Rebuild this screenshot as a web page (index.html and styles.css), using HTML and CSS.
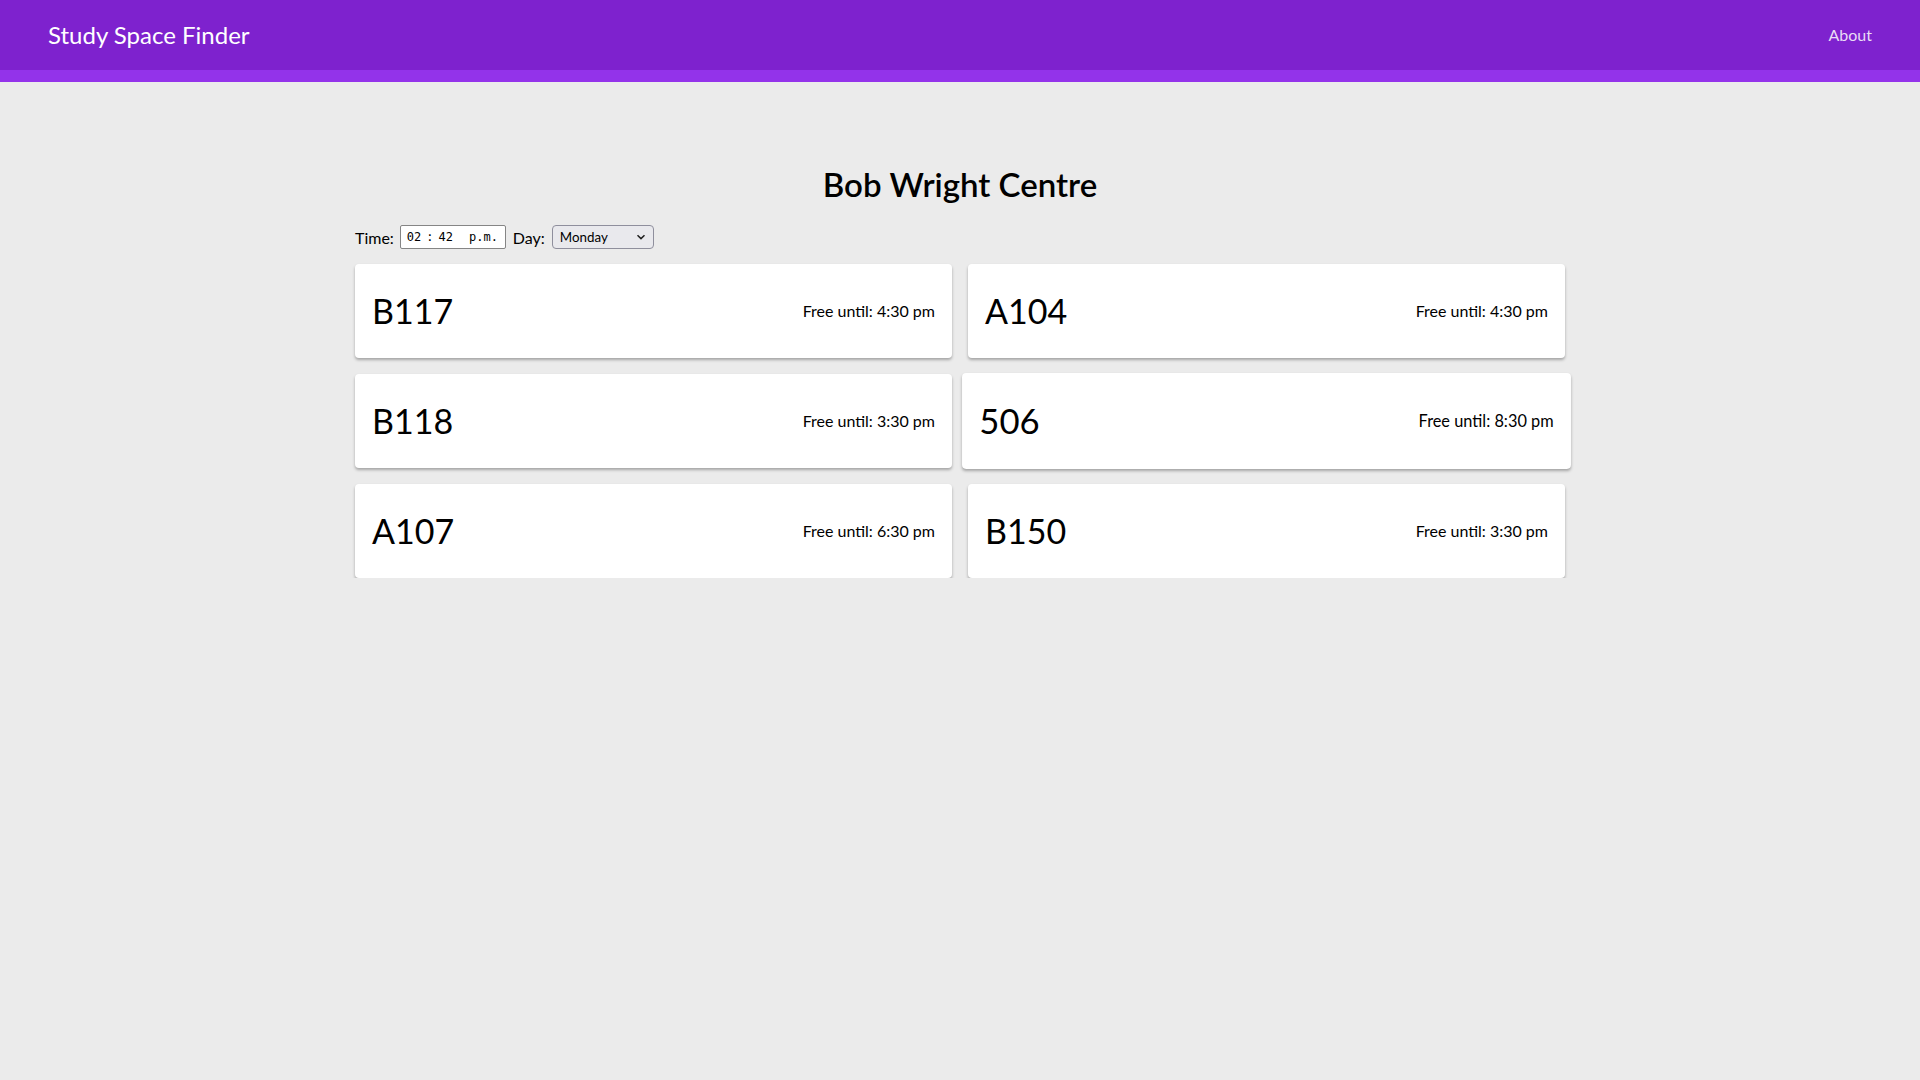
FILE: index.html
```html
<!DOCTYPE html>
<html lang="en">
<head>
<meta charset="utf-8">
<title>Study Space Finder</title>
<link rel="stylesheet" href="styles.css">
</head>
<body>
<header class="topbar">
  <div class="brand">Study Space Finder</div>
  <a class="nav-link" href="#">About</a>
</header>
<div class="accent"></div>
<main class="container">
  <h1 class="building">Bob Wright Centre</h1>
  <div class="controls">
    <label class="ctl-label">Time:</label>
    <div class="time-field"><span>02</span><span class="sep">:</span><span>42</span><span class="ampm">p.m.</span></div>
    <label class="ctl-label">Day:</label>
    <select class="day-select">
      <option selected>Monday</option>
      <option>Tuesday</option>
      <option>Wednesday</option>
      <option>Thursday</option>
      <option>Friday</option>
    </select>
  </div>
  <div class="grid">
    <div class="card"><span class="room">B117</span><span class="free">Free until: 4:30 pm</span></div>
    <div class="card"><span class="room">A104</span><span class="free">Free until: 4:30 pm</span></div>
    <div class="card"><span class="room">B118</span><span class="free">Free until: 3:30 pm</span></div>
    <div class="card card-hover"><span class="room">506</span><span class="free">Free until: 8:30 pm</span></div>
    <div class="card"><span class="room">A107</span><span class="free">Free until: 6:30 pm</span></div>
    <div class="card"><span class="room">B150</span><span class="free">Free until: 3:30 pm</span></div>
  </div>
</main>
</body>
</html>
```
FILE: styles.css
```css
* { box-sizing: border-box; }
html, body { margin: 0; padding: 0; }
body {
  background: #ebebeb;
  font-family: Lato, "Open Sans", sans-serif;
  color: #000;
}
.topbar {
  height: 70px;
  background: #7e22ce;
  display: flex;
  align-items: center;
  justify-content: space-between;
  padding: 0 48px 2px;
}
.brand {
  color: #fff;
  font-size: 24px;
}
.nav-link {
  color: #e9dcf5;
  text-decoration: none;
  font-size: 16px;
}
.accent {
  height: 12px;
  background: #9333ea;
}
.container {
  width: 1210px;
  margin: 0 auto;
  padding-top: 83px;
}
.building {
  margin: 0 0 22px;
  text-align: center;
  font-size: 33px;
  font-weight: 600;
  line-height: 38px;
}
.controls {
  display: flex;
  align-items: center;
  height: 24px;
  margin-bottom: 15px;
  font-size: 16px;
}
.ctl-label { margin-right: 6px; }
.time-field {
  display: flex;
  align-items: center;
  width: 106px;
  height: 24px;
  background: #fff;
  border: 1px solid #858585;
  border-radius: 2px;
  padding: 0 6px;
  margin-right: 7px;
  font-family: "DejaVu Sans Mono", "Liberation Mono", monospace;
  font-size: 12px;
}
.time-field .sep { margin: 0 5px; }
.time-field .ampm { margin-left: 16px; }
.time-field + .ctl-label { margin-right: 7px; }
.day-select {
  appearance: none;
  -webkit-appearance: none;
  width: 102px;
  height: 24px;
  padding: 0 0 0 7px;
  background-color: #e9e9ed;
  background-image: url("data:image/svg+xml,%3Csvg xmlns='http://www.w3.org/2000/svg' width='10' height='6' viewBox='0 0 10 6'%3E%3Cpath d='M1.5 1.2 L5 4.6 L8.5 1.2' fill='none' stroke='%23222' stroke-width='1.5'/%3E%3C/svg%3E");
  background-repeat: no-repeat;
  background-position: right 7px center;
  border: 1px solid #8f8f9d;
  border-radius: 4px;
  color: #000;
  font-family: Lato, sans-serif;
  font-size: 13.33px;
}
.grid {
  display: grid;
  grid-template-columns: 1fr 1fr;
  column-gap: 16px;
  row-gap: 16px;
}
.card {
  height: 94px;
  background: #fff;
  border-radius: 4px;
  box-shadow: 0 2px 3px rgba(0,0,0,0.3);
  display: flex;
  align-items: center;
  justify-content: space-between;
  padding: 0 17px 2px;
}
.card-hover { transform: scale(1.02); }
.room { font-size: 34px; }
.free { font-size: 16px; }
```
